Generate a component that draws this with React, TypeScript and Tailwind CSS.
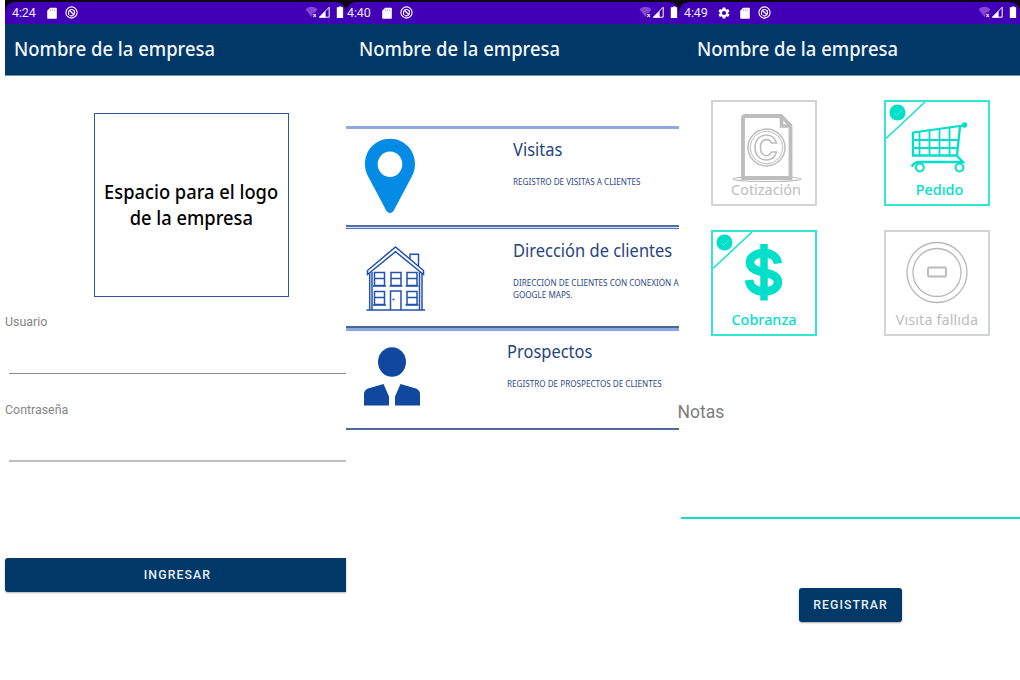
import type { ReactNode } from 'react';

const NOTO = "font-['Noto_Sans',sans-serif]";
const ROBOTO = "font-['Roboto',sans-serif]";

function SdCard() {
  return (
    <svg className="h-[12px] w-[10px]" viewBox="0 0 10 12">
      <path d="M3.2 0.8H9a.8.8 0 0 1 .8.8V11a.8.8 0 0 1-.8.8H1a.8.8 0 0 1-.8-.8V3.8Z" fill="#fff" />
      <path d="M3.5 2.4v1.600M5.4 2.4v1.600M7.3 2.4v1.600" stroke="#4100b5" strokeWidth=".7" opacity=".5" />
    </svg>
  );
}

function Loop() {
  return (
    <svg className="size-[13px]" viewBox="0 0 13 13" fill="none" stroke="#fff">
      <circle cx="6.5" cy="6.5" r="5.6" strokeWidth="1.1" />
      <path d="M3.6 9V6.2a2.9 2.9 0 0 1 5.7-.6M9.4 4.2v3.4a2.9 2.9 0 0 1-4.8 1.5" strokeWidth="1.1" />
      <path d="M4.8 4.8l4.2 4" strokeWidth="1.3" />
    </svg>
  );
}

function Gear() {
  return (
    <svg className="size-[14px]" viewBox="0 0 24 24" fill="#fff">
      <path d="M19.14 12.94c.04-.3.06-.61.06-.94s-.02-.64-.07-.94l2.03-1.58a.49.49 0 0 0 .12-.61l-1.92-3.32a.49.49 0 0 0-.59-.22l-2.39.96a7 7 0 0 0-1.62-.94l-.36-2.54a.48.48 0 0 0-.48-.41h-3.84a.48.48 0 0 0-.47.41l-.36 2.54c-.59.24-1.13.57-1.62.94l-2.39-.96a.48.48 0 0 0-.59.22L2.74 8.87a.48.48 0 0 0 .12.61l2.03 1.58c-.05.3-.09.63-.09.94s.02.64.07.94l-2.03 1.58a.49.49 0 0 0-.12.61l1.92 3.32c.12.22.37.29.59.22l2.39-.96c.5.38 1.03.7 1.62.94l.36 2.54c.05.24.24.41.48.41h3.84c.24 0 .44-.17.47-.41l.36-2.54a7 7 0 0 0 1.62-.94l2.39.96c.22.08.47 0 .59-.22l1.92-3.32a.48.48 0 0 0-.12-.61ZM12 15.6a3.6 3.6 0 1 1 0-7.2 3.6 3.6 0 0 1 0 7.2Z" />
    </svg>
  );
}

function Signals() {
  return (
    <svg className="h-[13px] w-[40px]" viewBox="0 0 40 13">
      <path d="M0.4 3.3Q6.5-1.6 12.6 3.3L9.8 6.8H7.6V9.2L6.5 11Z" fill="#8546d3" />
      <path d="M8.3 8l2.7 3M11 8l-2.7 3" stroke="#fff" strokeWidth="1.1" />
      <path d="M24.2 1.2V11.2H14.4Z" fill="none" stroke="#fff" strokeWidth="1" />
      <path d="M20.6 4.6V11.6H14L20.6 4.9Z" fill="#fff" />
      <path d="M32.300 1.300h1.500V.4h2.800v.9h1.500V12H31.800V1.300Z" fill="#fff" />
    </svg>
  );
}

function TopBar({ time, gear, pad, right }: { time: string; gear?: boolean; pad: string; right: string }) {
  return (
    <div className="shrink-0">
      <div className="h-[23.5px] bg-[#0c0612] pt-[2px]">
        <div className={`flex h-[21.5px] items-center rounded-t-[10px] bg-[#4100b5] ${right}`}>
          <span className={`w-[24px] whitespace-nowrap text-[12.5px] leading-[21px] tracking-[-0.1px] text-[#eee8fa] ${ROBOTO}`}>{time}</span>
          {gear && (
            <span className="ml-[9px] -mr-[2px]">
              <Gear />
            </span>
          )}
          <span className="ml-[11px]">
            <SdCard />
          </span>
          <span className="ml-[8px]">
            <Loop />
          </span>
          <span className="ml-auto">
            <Signals />
          </span>
        </div>
      </div>
      <div className={`h-[52px] border-b border-[#7891ab] bg-[#003868] ${pad}`}>
        <h1 className={`w-max origin-left whitespace-nowrap text-[20px] leading-[49px] font-medium text-[#f4f7fa] scale-x-[0.92] ${NOTO}`}>
          Nombre de la empresa
        </h1>
      </div>
    </div>
  );
}

function Login() {
  return (
    <section className="ml-[5px] flex w-[341px] flex-col">
      <TopBar time="4:24" pad="pl-[9px]" right="pl-[7px] pr-[1px]" />
      <div className={`mt-[37px] ml-[89px] flex h-[184.5px] w-[195px] flex-col items-center justify-center border border-[#33549b] text-center text-[20px] leading-[26px] font-medium text-black ${NOTO}`}>
        <span className="whitespace-nowrap scale-x-[0.915]">Espacio para el logo</span>
        <span className="whitespace-nowrap scale-x-[0.915]">de la empresa</span>
      </div>
      <label className={`mt-[15px] h-[20px] text-[12.400px] leading-[20px] text-[#858585] ${ROBOTO}`}>Usuario</label>
      <div className="mt-[40.5px] ml-[4px] h-[1.5px] bg-[#8a8a8a]" />
      <label className={`mt-[25.5px] h-[20px] text-[12.400px] leading-[20px] text-[#858585] ${ROBOTO}`}>Contraseña</label>
      <div className="mt-[40.5px] ml-[4px] h-[2px] bg-[#bfbfbf]" />
      <button className={`mt-[96px] h-[34px] rounded-l-[3px] bg-[#003868] pt-[1px] pl-[4px] text-[12.300px] font-medium tracking-[1.100px] text-[#e9eff5] shadow-[0_1px_2px_rgba(0,0,0,0.3)] ${ROBOTO}`}>
        INGRESAR
      </button>
    </section>
  );
}

function Pin() {
  return (
    <svg className="h-[76px] w-[52px]" viewBox="0 0 52 76">
      <path fillRule="evenodd" fill="#038be5" d="M26 .7C12 .7 1 11.700 1 26c0 7 2.500 11.500 5 16l16.500 31q3.500 4 7 0L46 42c2.500-4.500 5-9 5-16C51 11.700 40 .7 26 .7ZM26 13.500a12.300 12.700 0 1 1 0 25.400a12.300 12.700 0 1 1 0-25.400Z" />
    </svg>
  );
}

function HouseWindow({ x, y }: { x: number; y: number }) {
  return (
    <g>
      <rect x={x} y={y} width="10" height="13" />
      <path d={`M${x} ${y + 6}h10M${x - 1.5} ${y + 13.500}h13`} />
    </g>
  );
}

function House() {
  return (
    <svg className="h-[66px] w-[60px]" viewBox="0 0 60 66" fill="none" stroke="#2353ae" strokeWidth="1.5">
      <path d="M1.500 25.500L29.500 2l28 23.500v4L29.500 6.700L1.500 29.500Z" />
      <path d="M44 13.500V9.200h8.500v12" />
      <path d="M3.700 28v36.500M6 27v37.500M53.500 27v37.500M56 28.500v36M.5 65h58.500" />
      <HouseWindow x={8.500} y={27.500} />
      <HouseWindow x={25} y={27.500} />
      <HouseWindow x={41} y={27.500} />
      <HouseWindow x={8.500} y={46.500} />
      <HouseWindow x={41} y={46.500} />
      <path d="M24.500 65V46h10.500v19M26.500 54.500h2" />
    </svg>
  );
}

function Person() {
  return (
    <svg className="h-[60px] w-[58px]" viewBox="0 0 58 60" fill="#10489f">
      <ellipse cx="29" cy="15" rx="14" ry="14.700" />
      <path d="M20.500 37L26 49.500V58.500H1V47q0-4 4-5.500ZM37.500 37L32 49.500V58.500H57V47q0-4-4-5.500Z" />
    </svg>
  );
}

function Entry({ icon, title, lines, iconBox, textPad }: { icon: ReactNode; title: string; lines: string[]; iconBox: string; textPad: string }) {
  return (
    <article className="flex">
      <div className={`shrink-0 ${iconBox}`}>{icon}</div>
      <div className={textPad}>
        <h2 className={`w-max origin-left whitespace-nowrap text-[18px] leading-[24px] text-[#27447f] scale-x-[0.915] ${NOTO}`}>{title}</h2>
        <div className="mt-[15px]">
          {lines.map((l) => (
            <p key={l} className={`w-max origin-left whitespace-nowrap text-[8.500px] leading-[12px] text-[#2c4987] scale-x-[0.955] ${NOTO}`}>{l}</p>
          ))}
        </div>
      </div>
    </article>
  );
}

function Menu() {
  return (
    <section className="flex w-[333px] flex-col overflow-hidden">
      <TopBar time="4:40" pad="pl-[12.500px]" right="pl-[1px] pr-[0px]" />
      <div className="mt-[50px] h-[3px] bg-[#8eaae0]" />
      <div className="h-[96.500px]">
        <Entry icon={<Pin />} iconBox="w-[167px] pl-[18px] pt-[9px]" textPad="pt-[8px]" title="Visitas" lines={['REGISTRO DE VISITAS A CLIENTES']} />
      </div>
      <div className="h-[4px] border-t-2 border-b border-t-[#536fa5] border-b-[#4674cc] bg-[#dce5f5]" />
      <div className="h-[97px]">
        <Entry icon={<House />} iconBox="w-[167px] pl-[19.500px] pt-[16px]" textPad="pt-[9px]" title="Dirección de clientes" lines={['DIRECCIÓN DE CLIENTES CON CONEXIÓN A', 'GOOGLE MAPS.']} />
      </div>
      <div className="h-[5px] border-t-2 border-b-[3px] border-t-[#4c6597] border-b-[#83a9e8]" />
      <div className="h-[97px]">
        <Entry icon={<Person />} iconBox="w-[161px] pl-[17px] pt-[16px]" textPad="pt-[8px]" title="Prospectos" lines={['REGISTRO DE PROSPECTOS DE CLIENTES']} />
      </div>
      <div className="h-[2px] bg-[#53699c]" />
    </section>
  );
}

function SelectedCorner() {
  return (
    <svg className="absolute top-0 left-0 size-[42px]" viewBox="0 0 42 42" fill="none">
      <path d="M0 36.500L39 0" stroke="#13e3cc" strokeWidth="1.500" />
      <circle cx="11.500" cy="10.500" r="8" fill="#00dfca" />
      <path d="M8 11l2.500 2.500 5-5" stroke="#68e8dc" strokeWidth=".8" />
    </svg>
  );
}

function Quote() {
  return (
    <svg className="h-[82px] w-[102px]" viewBox="0 0 102 82" fill="none" stroke="#bdbdbd">
      <ellipse cx="54" cy="77" rx="34" ry="2.500" strokeWidth="1.200" />
      <path d="M32.500 14H68L77.500 23.500V76H30V16.500Q30 14 32.500 14Z" fill="#fff" strokeWidth="3.800" />
      <path d="M68.500 14.500v9.500h9" strokeWidth="3.500" />
      <circle cx="53.500" cy="45.500" r="18.500" strokeWidth="1.500" />
      <circle cx="53.500" cy="45.500" r="16.300" strokeWidth="1" />
      <path d="M63.500 41c-1.500-5-5-8-10-8-7 0-11.500 5-11.500 12.500S46.500 58 53.500 58c5 0 8.500-3 10-8h-5c-1 2.300-2.500 3.600-5 3.600-4 0-6-3-6-8s2-8 6-8c2.500 0 4 1.200 5 3.400Z" strokeWidth="1.600" />
    </svg>
  );
}

function Cart() {
  return (
    <svg className="h-[82px] w-[102px]" viewBox="1 1 102 82" fill="none" stroke="#00dfca" strokeWidth="2">
      <path d="M28 31.500L78.500 24.500" />
      <circle cx="79.500" cy="24" r="2.700" fill="#00dfca" stroke="none" />
      <path d="M28 31V54.500H72L75 25" strokeWidth="2.300" />
      <path d="M34.500 31v23M44.500 29.500v25M54.500 28v26.500M64.500 27v27.500M28 39h45.500M28 47h45" strokeWidth="1.800" />
      <path d="M72 55l6 6H34q-4 0-7.500 4.500" strokeWidth="2.300" />
      <circle cx="34.800" cy="66.500" r="3.900" />
      <circle cx="74.500" cy="66.500" r="3.900" />
    </svg>
  );
}

function Dollar() {
  return (
    <svg className="h-[82px] w-[102px]" viewBox="1 1.500 102 82" fill="none" stroke="#00dfca">
      <path d="M52 13.500V70" strokeWidth="7.500" />
      <path d="M66 33C65 26 59 22.500 52 22.500c-8 0-14 4-14 9.500 0 6 6 8 14 9.800s14 3.700 14 9.700c0 6-6 9.500-14 9.500s-14-3.500-15-11.500" strokeWidth="8.500" />
    </svg>
  );
}

function FailedVisit() {
  return (
    <svg className="h-[82px] w-[102px]" viewBox="1 1 102 82" fill="none" stroke="#b9b9b9" strokeWidth="1.300">
      <circle cx="52" cy="41.500" r="30" />
      <circle cx="52" cy="41.500" r="24" />
      <rect x="43" y="36.500" width="18" height="9" rx="1" strokeWidth="1.800" />
    </svg>
  );
}

function Tile({ label, active, icon, labelClass }: { label: string; active?: boolean; icon: ReactNode; labelClass: string }) {
  return (
    <div className={`relative flex h-[106px] w-[106px] flex-col border-2 ${active ? 'border-[#35e6d4] text-[#00dfca]' : 'border-[#d3d3d3] text-[#bdbdbd]'}`}>
      {active && <SelectedCorner />}
      <div className="h-[78px] w-[102px]">{icon}</div>
      <span className={`w-full text-center text-[14.400px] leading-[20px] whitespace-nowrap ${NOTO} ${labelClass}`}>{label}</span>
    </div>
  );
}

function Register() {
  return (
    <section className="flex w-[341px] flex-col">
      <TopBar time="4:49" gear pad="pl-[18px]" right="pl-[5px] pr-[2px]" />
      <div className="mt-[24.500px] ml-[32px] grid w-max grid-cols-[106px_106px] gap-x-[66.500px] gap-y-[24px]">
        <Tile label="Cotización" icon={<Quote />} labelClass="pl-[4px]" />
        <Tile label="Pedıdo" active icon={<Cart />} labelClass="pl-[6px] font-medium" />
        <Tile label="Cobranza" active icon={<Dollar />} labelClass="font-medium" />
        <Tile label="Vısıta fallıda" icon={<FailedVisit />} labelClass="pl-[1px] tracking-[0.1px]" />
      </div>
      <label className={`mt-[63.500px] -ml-[1.500px] h-[24px] text-[17.500px] leading-[24px] text-[#7c7c7c] ${ROBOTO}`}>Notas</label>
      <div className="mt-[93.500px] ml-[2px] h-[2px] bg-[#12dfcb]" />
      <button className={`mt-[69px] ml-[120px] h-[34px] w-[103px] rounded-[3px] bg-[#003868] pt-[1px] text-[12.300px] font-medium tracking-[1.050px] text-[#e9eff5] shadow-[0_1px_2px_rgba(0,0,0,0.35)] ${ROBOTO}`}>
        REGISTRAR
      </button>
    </section>
  );
}

export default function App() {
  return (
    <main className="flex h-[680px] w-[1020px] overflow-hidden bg-white">
      <Login />
      <Menu />
      <Register />
    </main>
  );
}
